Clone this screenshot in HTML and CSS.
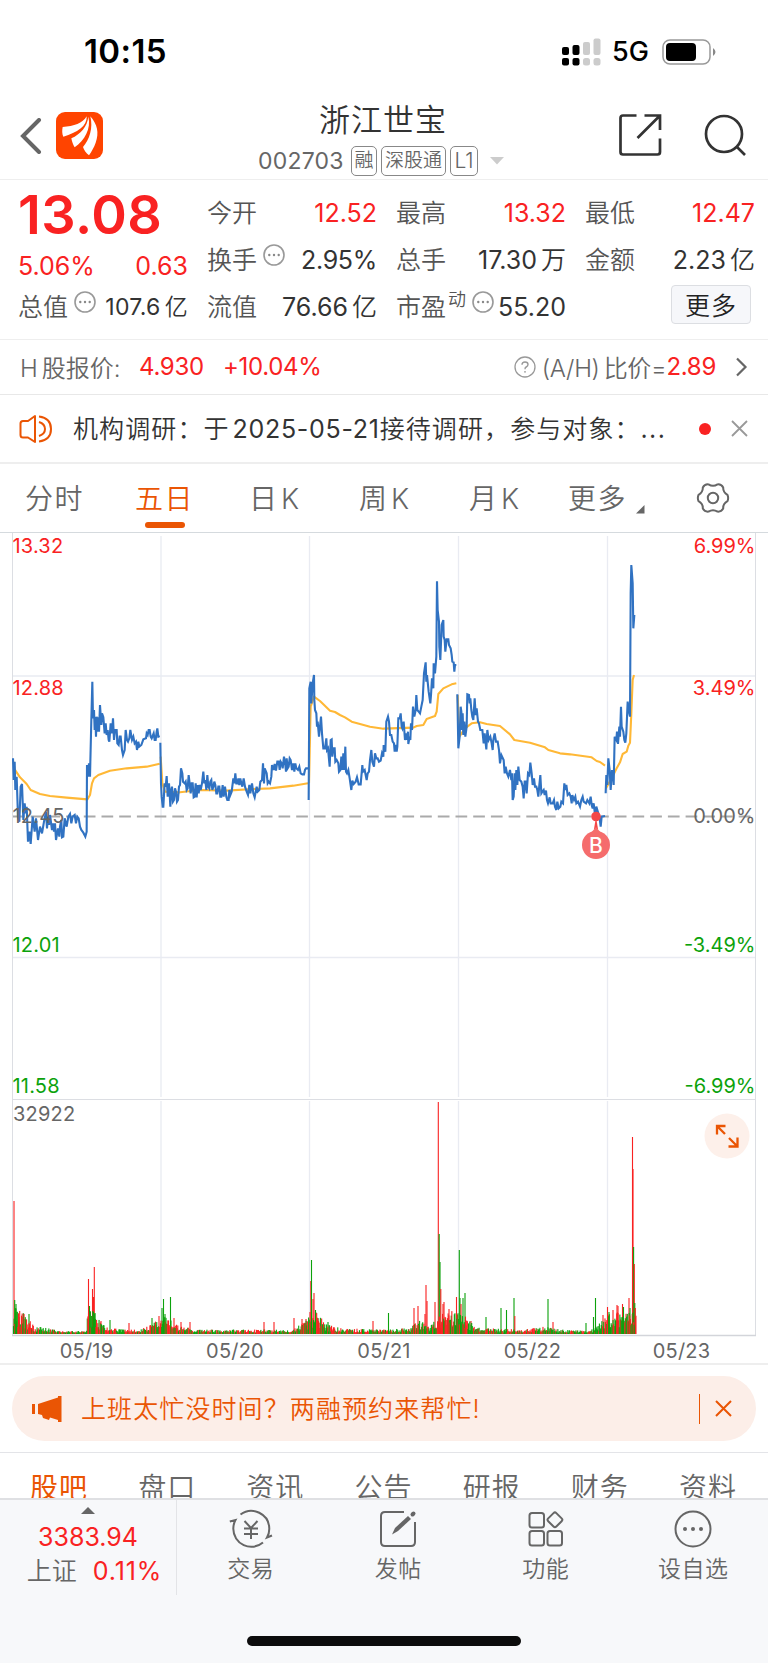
FILE: index.html
```html
<!DOCTYPE html>
<html lang="zh-CN">
<head>
    <meta charset="UTF-8">
    <meta name="viewport" content="width=device-width, initial-scale=1.0">
    <title>浙江世宝 002703</title>
    <link rel="stylesheet" href="styles.css">
</head>
<body>
    <div class="status-bar">
        <span class="time">10:15</span>
        <div class="status-icons">
            <svg class="signal" width="39" height="28" viewBox="0 0 39 28">
                <rect x="0" y="9" width="7" height="8" rx="2"/>
                <rect x="10.5" y="7" width="7" height="10" rx="2"/>
                <rect class="off" x="21" y="4" width="7" height="13" rx="2"/>
                <rect class="off" x="31.5" y="0.500" width="7" height="16.500" rx="2"/>
                <rect x="0" y="20" width="7" height="7.500" rx="2"/>
                <rect x="10.5" y="20" width="7" height="7.500" rx="2"/>
                <rect class="off" x="21" y="20" width="7" height="7.500" rx="2.500"/>
                <rect class="off" x="31.5" y="20" width="7" height="7.500" rx="2.500"/>
            </svg>
            <span class="network">5G</span>
            <svg class="battery" width="54" height="26" viewBox="0 0 54 26">
                <rect x="1" y="1" width="47" height="24" rx="7" fill="none" stroke="#999" stroke-width="1.500"/>
                <rect x="4" y="4" width="30" height="18" rx="4"/>
                <path d="M51 9 Q56 13 51 17Z" fill="#888"/>
            </svg>
        </div>
    </div>

    <header class="header">
        <div class="header-left">
            <svg class="back" width="22" height="36" viewBox="0 0 22 36">
                <path d="M19 2 L3 18 L19 34" fill="none" stroke="#666" stroke-width="4" stroke-linecap="round"/>
            </svg>
            <svg class="logo" width="47" height="47" viewBox="0 0 141 141">
                <rect width="141" height="141" rx="27" fill="#ff4400"/>
                <path d="M20 45 C54 43 80 34 92 13 C94 42 64 62 22 74 C18 66 18 55 20 45Z" fill="#fff"/>
                <path d="M97 14 C106 50 86 84 56 106 C51 98 48 89 46 79 C74 66 94 44 97 14Z" fill="#fff"/>
                <path d="M103 13 C124 38 130 62 119 92 C114 106 107 118 99 130 C90 124 84 114 81 105 C100 84 112 48 103 13Z" fill="#fff"/>
            </svg>
        </div>
        <div class="header-title">
            <div class="name">浙江世宝</div>
            <div class="code">
                <span class="code-num">002703</span>
                <span class="tag">融</span>
                <span class="tag tag-wide">深股通</span>
                <span class="tag tag-l1">L1</span>
                <svg class="drop" width="14" height="8" viewBox="0 0 14 8"><path d="M0 0 H14 L7 7.500Z" fill="#ccc"/></svg>
            </div>
        </div>
        <div class="header-right">
            <svg width="43" height="43" viewBox="0 0 43 43" fill="none" stroke="#333" stroke-width="2.700">
                <path d="M17.500 1.500 H4 Q1.500 1.500 1.500 4 V38 Q1.500 40.500 4 40.500 H38.500 Q41 40.500 41 38 V24.500"/>
                <path d="M25.500 1.500 H41 V16 M41 1.500 L18.500 24"/>
            </svg>
            <svg width="43" height="43" viewBox="0 0 43 43" fill="none" stroke="#333" stroke-width="2.700">
                <circle cx="20" cy="20" r="18"/>
                <path d="M32.500 32.500 L41 41"/>
            </svg>
        </div>
    </header>

    <section class="quote">
        <div class="quote-main">
            <div class="price">13.08</div>
            <div class="change"><span>5.06%</span><span>0.63</span></div>
            <div class="total">
                <span class="label">总值</span>
                <svg class="more-dot" width="22" height="22" viewBox="0 0 22 22"><use href="#dots"/></svg>
                <span class="value value-small">107.6<i class="unit">亿</i></span>
            </div>
        </div>
        <div class="quote-col">
            <div class="row"><span class="label">今开</span><span class="value red">12.52</span></div>
            <div class="row">
                <span class="label">换手</span>
                <svg class="more-dot" width="22" height="22" viewBox="0 0 22 22">
                    <g id="dots">
                        <circle cx="11" cy="11" r="10" fill="none" stroke="#999" stroke-width="1.600"/>
                        <circle cx="6.300" cy="11" r="1.200" fill="#888"/>
                        <circle cx="11" cy="11" r="1.200" fill="#888"/>
                        <circle cx="15.700" cy="11" r="1.200" fill="#888"/>
                    </g>
                </svg>
                <span class="value value-percent">2.95%</span>
            </div>
            <div class="row"><span class="label">流值</span><span class="value">76.66<i class="unit">亿</i></span></div>
        </div>
        <div class="quote-col">
            <div class="row"><span class="label">最高</span><span class="value red">13.32</span></div>
            <div class="row"><span class="label">总手</span><span class="value">17.30<i class="unit">万</i></span></div>
            <div class="row">
                <span class="label">市盈</span><span class="sup">动</span>
                <svg class="more-dot pe" width="22" height="22" viewBox="0 0 22 22"><use href="#dots"/></svg>
                <span class="value">55.20</span>
            </div>
        </div>
        <div class="quote-col">
            <div class="row"><span class="label">最低</span><span class="value red">12.47</span></div>
            <div class="row"><span class="label">金额</span><span class="value">2.23<i class="unit">亿</i></span></div>
            <div class="row"><button class="more-btn">更多</button></div>
        </div>
    </section>

    <section class="h-share">
        <span class="h-label">H<i class="unit">股报价:</i></span>
        <span class="h-price">4.930</span>
        <span class="h-change">+10.04%</span>
        <svg class="help" width="22" height="22" viewBox="0 0 22 22">
            <circle cx="11" cy="11" r="10" fill="none" stroke="#999" stroke-width="1.300"/>
            <path d="M8 8.800 Q8 6 11 6 Q14 6 14 8.500 Q14 10.200 12.200 11 Q11 11.600 11 13.200" fill="none" stroke="#999" stroke-width="1.400"/>
            <circle cx="11" cy="15.800" r="0.900" fill="#999"/>
        </svg>
        <span class="ratio">(A/H)<i class="unit">比价</i>=</span><span class="ratio-num">2.89</span>
        <svg class="arrow" width="13" height="20" viewBox="0 0 13 20"><path d="M2 1.500 L10.500 10 L2 18.500" fill="none" stroke="#666" stroke-width="2.200"/></svg>
    </section>

    <section class="news">
        <svg class="speaker" width="34" height="30" viewBox="0 0 34 30" fill="none" stroke="#ea5504" stroke-width="2">
            <path d="M16 2 V28 L9 23.500 H4 Q1.500 23.500 1.500 21 V9.500 Q1.500 7 4 7 H9Z" stroke-linejoin="round"/>
            <path d="M20 8 Q26 10 26 15 Q26 20 20 22"/>
            <path d="M20 2.500 Q32 4 32 15 Q32 26 20 27.500"/>
        </svg>
        <span class="news-text"><span>机构调研：于</span><span class="news-date">2025-05-21</span><span>接待调研，参与对象：</span><span class="ellipsis">...</span></span>
        <span class="red-dot"></span>
        <svg width="17" height="17" viewBox="0 0 17 17"><path d="M1 1 L16 16 M16 1 L1 16" stroke="#999" stroke-width="1.800"/></svg>
    </section>

    <nav class="period-tabs">
        <span class="period">分时</span>
        <span class="period active">五日</span>
        <span class="period k">日K</span>
        <span class="period k">周K</span>
        <span class="period k">月K</span>
        <span class="period more">更多</span>
        <svg class="corner" width="9" height="9" viewBox="0 0 9 9"><path d="M8.500 0 V8.500 H0Z" fill="#666"/></svg>
        <svg class="gear" width="34" height="32" viewBox="-17 -16 34 32" fill="none" stroke="#666" stroke-width="2" stroke-linejoin="round">
            <path d="M14.500 3.200 Q9.900 5.700 10.200 10.600 Q8.300 14 4.500 13.600 Q0 10.800 -4.500 13.600 Q-8.300 14 -10.200 10.600 Q-9.900 5.700 -14.500 3.200 Q-15.800 0 -14.500 -3.200 Q-9.900 -5.700 -10.200 -10.600 Q-8.300 -14 -4.500 -13.600 Q0 -10.800 4.500 -13.600 Q8.300 -14 10.200 -10.600 Q9.900 -5.700 14.500 -3.200 Q15.800 0 14.500 3.200Z"/>
            <circle r="5.200"/>
        </svg>
    </nav>

    <section class="chart-box">
        <svg class="chart" width="768" height="831" viewBox="0 0 768 831">
            <!-- grid -->
            <g class="grid">
                <path d="M13 143 H755 M13 424.500 H755"/>
                <path d="M161 3 V564 M309.500 3 V564 M458.500 3 V564 M607.500 3 V564"/>
                <path d="M161 568 V801 M309.500 568 V801 M458.500 568 V801 M607.500 568 V801"/>
            </g>
            <path class="frame" d="M12.500 0 V802 M755.500 0 V802 M12.500 566.500 H755"/>
            <path class="frame-bottom" d="M12 802.500 H756"/>
            <path class="zero" d="M13 283.500 H755"/>

            <!-- average price -->
            <g class="avg">
                <g transform="translate(0 107) scale(.33333)">
                    <polyline points="40,365 44,388 60,412 80,432 92,450 120,462 150,468 200,473 262,478 270,465 276,430 282,415 295,405 330,392 380,385 440,380 479,371"/>
                    <polyline points="482,350 487,430 495,455 540,457 600,450 680,452 760,447 810,445 880,437 924,430"/>
                </g>
                <g transform="translate(300 7) scale(.33333)">
                    <polyline points="27,730 32,500 42,470 60,483 90,512 105,516 120,525 135,532 155,545 180,552 210,560 250,566 340,563 350,558 370,555 380,537 405,528 410,515 415,462 430,445 455,433 469,430"/>
                    <polyline points="473,465 478,590 495,565 515,550 540,547 560,552 600,558 630,583 643,600 690,608 735,622 745,630 780,640 810,643 875,652 890,663 900,666 915,677"/>
                    <polyline points="918,745 935,715 950,685 960,667 968,642 980,635 985,617 990,608 994,520 998,420 1002,405"/>
                </g>
            </g>

            <!-- price -->
            <g class="line">
                <g transform="translate(0 107) scale(.33333)">
                    <polyline points="39,355 41,420 44,365 46,450 50,410 54,530 58,545 62,440 66,432 70,540 74,490 77,520 80,500 84,605 88,575 92,612 98,530 104,575 108,535 114,600 120,560 126,580 132,545 138,515 141,565 144,530 147,555 150,525 156,570 160,550 162,575 165,550 168,600 174,565 178,590 180,560 184,540 186,592 190,590 194,535 200,560 205,530 210,522 214,550 218,530 224,525 228,550 232,530 236,535 240,560 244,570 250,578 256,590 260,575 261,375 264,410 267,370 270,410 274,240 277,125 279,235 282,210 284,270 286,230 288,290 290,230 292,275 295,232 297,275 300,195 304,255 306,220 310,232 314,280 317,250 320,285 323,270 326,300 328,305 332,250 336,280 339,235 342,300 345,270 350,270 352,310 356,315 359,290 362,290 366,330 369,345 374,330 377,270 381,300 384,305 388,295 391,270 396,300 400,290 404,310 408,305 411,330 415,305 418,320 424,315 430,298 438,295 440,280 443,285 446,270 449,270 452,290 455,295 461,280 464,300 467,300 470,275 472,265 475,290 479,288"/>
                    <polyline points="481,308 483,430 485,470 488,500 490,500 494,430 497,440 500,408 503,470 507,430 509,460 511,500 514,450 516,440 519,485 522,480 525,445 528,455 531,485 534,480 537,440 540,435 543,385 547,400 549,425 554,430 557,425 560,450 563,445 566,405 570,440 572,460 575,430 578,430 581,472 584,470 587,430 590,472 593,435 596,460 599,435 602,450 606,430 610,395 613,430 616,420 619,450 622,405 625,440 628,445 631,425 634,420 637,450 640,440 643,425 646,435 649,460 652,460 655,440 658,440 661,470 664,470 668,435 671,470 675,440 679,470 682,480 686,480 688,450 691,465 695,455 700,415 703,430 706,400 709,430 712,430 715,415 718,435 721,415 724,430 727,440 731,415 735,440 740,455 744,465 748,435 751,460 756,430 760,460 764,472 770,440 773,455 778,450 781,425 786,420 789,370 792,430 794,385 800,400 803,430 806,425 810,430 814,410 816,375 821,390 824,372 828,392 832,365 836,365 839,390 842,365 845,370 848,385 852,350 856,375 858,395 860,355 863,385 866,380 869,355 872,360 876,390 880,370 883,395 886,370 889,385 894,390 898,380 902,400 907,403 912,403 915,390 918,385 924,385"/>
                </g>
                <g transform="translate(300 7) scale(.33333)">
                    <polyline points="26,780 28,445 32,425 34,490 38,430 42,405 43,480 45,510 49,520 51,560 53,545 57,590 60,560 63,530 66,580 70,625 75,625 79,595 81,630 84,625 89,680 92,600 95,598 97,650 100,625 104,625 106,665 110,660 115,670 117,695 121,690 124,650 127,690 130,640 133,690 136,620 138,695 141,700 145,690 149,715 154,750 157,722 161,732 167,725 171,712 176,733 182,733 187,675 189,695 194,690 200,720 203,700 207,695 210,660 214,630 217,665 222,680 225,640 229,655 233,655 237,665 242,662 246,640 250,650 251,615 256,635 259,545 264,530 267,545 270,585 274,585 278,605 282,610 284,635 287,615 290,635 292,620 295,535 299,535 302,520 305,560 307,565 311,545 315,600 319,580 321,600 324,575 325,612 329,590 331,600 333,550 336,570 339,500 343,530 347,510 349,465 352,510 356,515 360,520 364,500 368,480 372,400 377,367 379,425 381,405 386,455 391,490 393,465 396,415 400,445 401,370 405,400 409,350 411,124 413,210 417,245 418,320 421,360 425,255 430,240 431,290 434,300 436,335 440,298 445,298 447,315 452,325 455,345 457,365 461,367 463,395 465,375 469,375"/>
                    <polyline points="472,463 475,625 479,590 482,500 484,515 486,570 488,520 490,585 493,545 496,590 500,560 502,463 507,465 509,490 511,475 514,510 517,530 520,540 524,475 527,525 530,505 534,545 537,550 541,570 547,570 551,610 554,580 559,628 562,570 566,600 571,590 575,610 578,630 580,600 584,580 588,605 593,605 597,630 600,670 604,645 611,660 614,700 617,680 621,700 625,710 630,690 634,720 636,700 638,780 641,770 644,700 646,750 649,690 652,735 655,680 659,720 664,725 668,740 671,775 674,725 677,725 680,760 684,700 688,705 691,668 695,700 698,735 702,715 705,740 709,740 712,750 715,770 718,735 721,705 724,760 727,755 731,750 734,765 738,752 741,780 744,790 749,772 752,790 758,790 762,780 765,800 769,810 772,785 776,805 781,800 784,785 789,790 793,730 796,750 799,735 803,765 808,760 812,770 815,790 817,765 822,780 826,770 829,790 834,785 840,800 844,780 848,770 851,785 858,790 862,780 868,790 872,770 875,795 878,805 881,790 884,815 886,830 889,800 892,810 895,820 899,835 902,860 905,830 915,828"/>
                    <polyline points="917,760 919,705 922,735 925,655 929,690 932,750 936,690 939,700 941,735 944,590 949,600 951,575 954,612 958,560 960,590 963,500 965,560 970,575 973,600 976,608 979,580 983,485 987,515 990,530 992,160 994,75 998,130 1000,265 1003,225"/>
                </g>
            </g>

            <g id="volume"></g>

            <!-- buy marker -->
            <circle cx="596" cy="283.500" r="4.800" fill="#f44848"/>
            <path d="M596 284 L598 296 H594Z" fill="#f44848"/>
            <circle cx="596" cy="312" r="14" fill="#f56c6c"/>
            <path d="M596 294 L602 301 H590Z" fill="#f56c6c"/>
            <text class="marker" x="596" y="319.500" text-anchor="middle">B</text>

            <g class="axis">
                <text class="up" x="12.500" y="20">13.32</text>
                <text class="up" x="12.500" y="162">12.88</text>
                <text class="flat" x="12.500" y="290">12.45</text>
                <text class="down" x="12.500" y="418.500">12.01</text>
                <text class="down" x="12.500" y="559.500">11.58</text>
                <text class="flat" x="13" y="587.500">32922</text>
            </g>
            <g class="axis percent" text-anchor="end">
                <text class="up" x="755.500" y="20">6.99%</text>
                <text class="up" x="755.500" y="162">3.49%</text>
                <text class="flat" x="755.500" y="290">0.00%</text>
                <text class="down" x="755.500" y="418.500">-3.49%</text>
                <text class="down" x="755.500" y="559.500">-6.99%</text>
            </g>
            <g class="axis dates" text-anchor="middle">
                <text x="86.500" y="824.500">05/19</text>
                <text x="235" y="824.500">05/20</text>
                <text x="384" y="824.500">05/21</text>
                <text x="532.500" y="824.500">05/22</text>
                <text x="681.500" y="824.500">05/23</text>
            </g>
        </svg>
        <svg class="expand" width="46" height="46" viewBox="0 0 46 46">
            <circle cx="23" cy="23" r="22.500" fill="#fdf0ea"/>
            <path d="M13 21.500 V13 H21.500 M13 13 L21 21 M24.500 33.500 H33.500 V24.500 M33.500 33.500 L25 25" fill="none" stroke="#ea5504" stroke-width="2.300"/>
        </svg>
    </section>

    <section class="promo">
        <div class="banner">
            <svg width="30" height="26" viewBox="0 0 30 26" fill="#ea5504">
                <rect x="0" y="8" width="3" height="10"/>
                <path d="M6 8 L26 1.500 V0 H29.500 V26 H26 V24 L18 21.500 L17 24 L11 22 L10 19 L6 18Z"/>
            </svg>
            <span class="banner-text">上班太忙没时间？两融预约来帮忙!</span>
            <span class="banner-line"></span>
            <svg width="17" height="17" viewBox="0 0 17 17"><path d="M1 1 L16 16 M16 1 L1 16" stroke="#ea5504" stroke-width="2"/></svg>
        </div>
    </section>

    <nav class="info-tabs">
        <span class="active">股吧</span>
        <span>盘口</span>
        <span>资讯</span>
        <span>公告</span>
        <span>研报</span>
        <span>财务</span>
        <span>资料</span>
    </nav>

    <footer class="bottom-bar">
        <div class="index">
            <svg width="14" height="7" viewBox="0 0 14 7"><path d="M7 0 L14 7 H0Z" fill="#666"/></svg>
            <div class="index-num">3383.94</div>
            <div class="index-row"><span class="index-name">上证</span><span class="index-change">0.11%</span></div>
        </div>
        <div class="action">
            <svg width="44" height="40" viewBox="0 0 44 40" fill="none" stroke="#666" stroke-width="2">
                <path d="M11.500 5.500 A18 18 0 0 1 40.300 19.700 A18 18 0 0 1 38 28.500 L43 26.500"/>
                <path d="M34 33.500 A18 18 0 0 1 4.300 19.700 A18 18 0 0 1 6.500 11 L0.800 12.500"/>
                <path d="M15.500 12 L22 19 L28.500 12 M22 19 V30 M15 19.500 H29 M15 25 H29"/>
            </svg>
            <span>交易</span>
        </div>
        <div class="action">
            <svg width="38" height="40" viewBox="0 0 38 40" fill="none" stroke="#666" stroke-width="2">
                <path d="M25 3 H6 Q2 3 2 7 V33 Q2 37 6 37 H32 Q36 37 36 33 V13"/>
                <path d="M13 25.500 L16 19 L29 7 L32 10 L19 22Z" fill="#666" stroke="none"/>
                <path d="M33.500 5.500 L34.500 4.500" stroke-width="4" stroke-linecap="round"/>
            </svg>
            <span>发帖</span>
        </div>
        <div class="action">
            <svg width="36" height="40" viewBox="0 0 36 40" fill="none" stroke="#666" stroke-width="2">
                <rect x="1.500" y="4" width="14.500" height="14.500" rx="2.500"/>
                <rect x="1.500" y="22" width="14.500" height="14.500" rx="2.500"/>
                <rect x="19.500" y="22" width="14.500" height="14.500" rx="2.500"/>
                <rect x="21" y="5" width="11.500" height="11.500" rx="2" transform="rotate(45 26.750 11)"/>
            </svg>
            <span>功能</span>
        </div>
        <div class="action">
            <svg width="40" height="40" viewBox="0 0 40 40">
                <circle cx="20" cy="20" r="17.500" fill="none" stroke="#666" stroke-width="2"/>
                <circle cx="12" cy="20" r="2" fill="#666"/>
                <circle cx="20" cy="20" r="2" fill="#666"/>
                <circle cx="28" cy="20" r="2" fill="#666"/>
            </svg>
            <span>设自选</span>
        </div>
    </footer>
    <div class="home-area"><div class="home-indicator"></div></div>

    <script src="volume.js"></script>
</body>
</html>
```
FILE: styles.css
```css
* {
    box-sizing: border-box;
}

body {
    margin: 0;
    width: 768px;
    height: 1663px;
    overflow: hidden;
    background-color: #fff;
    color: #333;
    font-family: Inter, "Noto Sans CJK SC", sans-serif;
    font-size: 25px;
    white-space: nowrap;
}

svg {
    display: block;
    flex: none;
}

i {
    font-style: normal;
}

.red {
    color: #f92222;
}

.label,
.unit,
.name,
.sup,
.tag,
.more-btn,
.h-label,
.ratio,
.news-text,
.period,
.banner-text,
.info-tabs,
.index-name,
.action {
    font-weight: 350;
}

/* status bar */
.status-bar {
    height: 90px;
    padding: 30px 52px 0 84px;
    display: flex;
    justify-content: space-between;
    align-items: flex-start;
    color: #000;
}

.time {
    font-size: 33px;
    line-height: 42px;
    font-weight: 600;
    letter-spacing: 0.4px;
}

.status-icons {
    display: flex;
    align-items: center;
    padding-top: 7px;
}

.signal .off {
    fill: #ccc;
}

.network {
    width: 50px;
    margin-left: 11px;
    padding-top: 1px;
    font-size: 27px;
    line-height: 28px;
    font-weight: 450;
}

/* header */
.header {
    height: 90px;
    display: flex;
    justify-content: space-between;
    border-bottom: 1px solid #eee;
}

.header-left {
    width: 143px;
    padding: 2px 0 0 20px;
    display: flex;
    align-items: center;
    gap: 14px;
}

.header-title {
    padding-top: 9px;
}

.name {
    width: 130px;
    margin-left: 61px;
    font-size: 31px;
    line-height: 42px;
    letter-spacing: 1px;
}

.code {
    display: flex;
    align-items: center;
    margin-top: 4px;
    height: 31px;
}

.code-num {
    width: 93px;
    color: #666;
    font-size: 23px;
    letter-spacing: 0.2px;
}

.tag {
    width: 26px;
    height: 30px;
    margin-right: 4px;
    border: 1.5px solid #888;
    border-radius: 5px;
    color: #666;
    font-size: 19px;
    line-height: 27px;
    text-align: center;
}

.tag-wide {
    width: 65px;
}

.tag-l1 {
    width: 28px;
    font-size: 21px;
}

.drop {
    margin-left: 8px;
}

.header-right {
    padding: 24px 21px 0 0;
    display: flex;
    gap: 42px;
}

/* quote */
.quote {
    height: 160px;
    padding: 9px 13px 0 18px;
    display: flex;
    gap: 20px;
    border-bottom: 1px solid #eee;
}

.quote-main {
    width: 170px;
}

.price {
    color: #f92222;
    font-size: 54px;
    font-weight: 600;
    line-height: 52px;
    letter-spacing: 0.5px;
    height: 50px;
}

.change {
    height: 54px;
    display: flex;
    justify-content: space-between;
    align-items: center;
    color: #f92222;
}

.total {
    height: 27px;
    display: flex;
    align-items: center;
}

.quote-col {
    width: 170px;
    margin-left: -1px;
}

.row {
    height: 47px;
    display: flex;
    align-items: center;
}

.label {
    color: #555;
    line-height: 30px;
}

.value {
    margin-left: auto;
    line-height: 30px;
}

.value-small {
    font-size: 23px;
    letter-spacing: 0.3px;
}

.value-percent {
    letter-spacing: -0.3px;
}

.unit {
    margin-left: 4px;
}

.more-dot {
    margin: -9px 0 0 6px;
}

.sup {
    margin: -18px 0 0 2px;
    color: #555;
    font-size: 18px;
}

.more-btn {
    width: 80px;
    height: 39px;
    margin: -5px 4px 0 auto;
    padding: 3px 0 0;
    background-color: #f6f7fa;
    border: 1.5px solid #dcdee2;
    border-radius: 4px;
    color: #222;
    font-family: inherit;
    font-size: 25px;
    line-height: 34px;
    letter-spacing: 1px;
}

/* H share */
.h-share {
    height: 55px;
    padding: 0 20px 1px;
    display: flex;
    align-items: center;
    border-bottom: 1px solid #e8e8e8;
    color: #666;
    font-size: 24px;
    letter-spacing: -0.3px;
}

.h-label {
    width: 119px;
    letter-spacing: 0;
}

.h-price {
    width: 84px;
    color: #f92222;
}

.h-change,
.ratio-num {
    color: #f92222;
}

.help {
    margin-left: auto;
    margin-right: 6px;
}

.ratio {
    font-size: 24px;
    letter-spacing: -0.3px;
}

.arrow {
    margin-left: 19px;
}

/* news */
.news {
    height: 69px;
    padding: 0 20px 0 19px;
    display: flex;
    align-items: center;
    border-bottom: 2px solid #eee;
}

.news-text {
    margin: -3px 0 0 20px;
    width: 610px;
    display: flex;
    align-items: baseline;
    letter-spacing: 1.1px;
}

.news-date {
    margin: 0 0 0 3px;
    font-weight: 400;
    letter-spacing: 0.7px;
    font-feature-settings: "calt" 0;
}

.ellipsis {
    font-family: "Noto Sans", sans-serif;
    font-weight: 400;
    letter-spacing: 2px;
}

.red-dot {
    width: 12px;
    height: 12px;
    margin: 0 20px 0 16px;
    border-radius: 50%;
    background-color: #f92222;
}

/* period tabs */
.period-tabs {
    height: 69px;
    padding: 0 38px 0 25px;
    display: flex;
    align-items: center;
    border-bottom: 1px solid #d5dade;
    color: #666;
    font-size: 28px;
}

.period {
    width: 110px;
    height: 68px;
    line-height: 71px;
    letter-spacing: 1.5px;
}

.period.k {
    margin-left: 4px;
    width: 106px;
    letter-spacing: 4px;
}

.period.more {
    width: 106px;
    margin-left: -7px;
}

.period.active {
    display: flex;
    flex-direction: column;
    color: #ea5504;
}

.period.active::after {
    content: "";
    width: 40px;
    height: 6px;
    margin: -13px 0 0 10px;
    flex: none;
    border-radius: 3px;
    background-color: #ea5504;
}

.corner {
    margin: 22px 0 0 -38px;
}

.gear {
    margin-left: auto;
}

/* chart */
.chart-box {
    position: relative;
    height: 832px;
    border-bottom: 2px solid #eee;
}

.grid path {
    fill: none;
    stroke: #e9ebf2;
    stroke-width: 1.3;
}

.frame {
    fill: none;
    stroke: #dcdee3;
}

.frame-bottom {
    stroke: #d3d5da;
    stroke-width: 1.3;
}

.zero {
    stroke: #aaa;
    stroke-width: 1.8;
    stroke-dasharray: 11.7 6;
}

.avg polyline {
    fill: none;
    stroke: #ffb836;
    stroke-width: 6.3;
    stroke-linejoin: round;
}

.line polyline {
    fill: none;
    stroke: #3072c2;
    stroke-width: 6.3;
}

.axis {
    font-size: 20px;
    letter-spacing: 0.2px;
}

.percent {
    letter-spacing: 0;
}

.axis .up {
    fill: #f92222;
}

.axis .down {
    fill: #0ca20c;
}

.axis .flat,
.dates text {
    fill: #666;
}

.marker {
    fill: #fff;
    font-size: 21px;
    font-weight: 500;
}

.expand {
    position: absolute;
    left: 704px;
    top: 580px;
}

.vol-up {
    fill: #f92222;
}

.vol-down {
    fill: #0ca20c;
}

/* promo banner */
.promo {
    height: 88px;
    padding: 11px 12px;
    border-bottom: 1px solid #e3e4e8;
}

.banner {
    height: 65px;
    padding: 0 24px 0 20px;
    display: flex;
    align-items: center;
    border-radius: 33px;
    background-color: #fceee8;
    color: #ea5504;
}

.banner-text {
    margin: -4px 0 0 19px;
    letter-spacing: 1.1px;
}

.banner-line {
    width: 1.5px;
    height: 30px;
    margin: 0 15px 0 auto;
    background-color: #ea5504;
}

/* info tabs, partly hidden by the bottom bar */
.info-tabs {
    height: 45px;
    padding: 16px 31px 0 30px;
    display: flex;
    justify-content: space-between;
    overflow: hidden;
    color: #666;
    font-size: 28px;
    line-height: 38px;
    letter-spacing: 1px;
}

.info-tabs .active {
    color: #ea5504;
    font-weight: 400;
}

/* bottom bar */
.bottom-bar {
    height: 97px;
    display: flex;
    border-top: 2px solid #dfe0e3;
    background-color: #f7f8fa;
    color: #666;
}

.index {
    width: 177px;
    height: 95px;
    padding-top: 7px;
    display: flex;
    flex-direction: column;
    align-items: center;
    border-right: 1.5px solid #e3e4e7;
}

.index-num {
    margin-top: 6px;
    color: #f92222;
    line-height: 34px;
}

.index-row {
    display: flex;
    gap: 16px;
    padding-left: 13px;
    line-height: 35px;
}

.index-change {
    color: #f92222;
    letter-spacing: 0.9px;
}

.action {
    width: 147.5px;
    padding-top: 9px;
    display: flex;
    flex-direction: column;
    align-items: center;
    font-size: 23px;
    line-height: 41px;
    letter-spacing: 0.5px;
}

.home-area {
    height: 69px;
    padding-top: 41px;
    background-color: #f7f8fa;
}

.home-indicator {
    width: 274px;
    height: 10px;
    margin: 0 auto;
    border-radius: 5px;
    background-color: #0c0c0c;
}
```
FILE: volume.js
```javascript
const volume = document.getElementById("volume");
const baseline = 801;

// [x, height] of the usual trade volume during the five days
const level = [
    [13, 20], [20, 16], [30, 10], [35, 5], [50, 4], [60, 2], [70, 2], [86, 2], [88, 15], [95, 16],
    [102, 8], [110, 4], [140, 3], [150, 6], [160, 13], [166, 13], [172, 9], [180, 5], [200, 3],
    [290, 3], [305, 8], [309, 12], [316, 16], [325, 7], [340, 4], [380, 3], [410, 4], [418, 9],
    [424, 8], [430, 5], [436, 12], [446, 15], [455, 16], [464, 13], [475, 5], [485, 4], [520, 3],
    [545, 5], [560, 3], [590, 2], [600, 8], [610, 14], [625, 15], [636, 14]
];

// [x, height, up]
const peaks = [
    [14, 133, 1], [14.7, 34, 0], [16, 30, 0], [17, 22, 0], [19, 17, 0], [22, 17, 1], [24, 15, 0], [29, 20, 0],
    [88.5, 55, 1], [89.5, 28, 0], [92.5, 45, 1], [93.5, 37, 1], [94.3, 67, 1], [95, 21, 0], [101, 13, 1],
    [110, 14, 0], [129, 11, 1], [152, 16, 0], [159, 18, 1], [162, 26, 0], [163.5, 35, 0], [165, 20, 0],
    [170.5, 37, 0], [174, 16, 1], [181, 12, 1], [190, 12, 1], [264, 12, 1], [274, 12, 1], [294, 16, 1],
    [302, 15, 1], [306, 15, 1], [310, 22, 1], [310.8, 53, 1], [311.5, 74, 0], [313, 35, 1], [314, 41, 1],
    [315.5, 24, 0], [318, 16, 0], [328, 12, 0], [373, 13, 1], [388.5, 21, 0], [414, 26, 1], [418, 28, 1],
    [425, 20, 1], [426, 49, 1], [427, 33, 1], [435, 32, 1], [438.3, 232, 1], [439.2, 100, 0], [440, 72, 0],
    [440.8, 45, 1], [443, 30, 1], [444, 32, 1], [449, 25, 1], [456.5, 37, 1], [459.3, 84, 0], [460, 36, 0],
    [461, 30, 1], [463, 36, 0], [465, 41, 0], [471, 13, 1], [486, 17, 0], [501, 26, 0], [506.5, 24, 0],
    [514, 36, 0], [514.8, 18, 1], [548, 35, 0], [553, 12, 1], [586, 11, 0], [593.5, 17, 0], [595.5, 36, 0],
    [603, 19, 1], [607.5, 27, 1], [609, 22, 0], [613, 24, 1], [617, 29, 1], [618, 28, 1], [622.5, 30, 1],
    [623.5, 27, 0], [629, 36, 1], [630, 26, 0], [632.5, 197, 1], [633, 165, 1], [633.6, 87, 0],
    [634.3, 70, 1], [634.8, 31, 0], [635.3, 26, 1]
];

let seed = 19;
function random() {
    seed = (seed * 16807) % 2147483647;
    return seed / 2147483647;
}

function levelAt(x) {
    for (let i = 1; i < level.length; i++) {
        if (x <= level[i][0]) {
            const [x0, h0] = level[i - 1];
            const [x1, h1] = level[i];
            return h0 + (h1 - h0) * (x - x0) / (x1 - x0);
        }
    }
    return 12;
}

function addBar(x, height, up) {
    const bar = document.createElementNS("http://www.w3.org/2000/svg", "rect");
    bar.setAttribute("x", x - 0.55);
    bar.setAttribute("y", baseline - height);
    bar.setAttribute("width", 1.1);
    bar.setAttribute("height", height);
    bar.setAttribute("class", up ? "vol-up" : "vol-down");
    volume.appendChild(bar);
}

peaks.forEach(([x, height, up]) => addBar(x, height, up));

for (let x = 13.5; x < 636; x += 0.62) {
    const height = Math.max(1.5, levelAt(x) * (0.4 + random() * 1.1));
    addBar(x, height, random() < 0.45);
}
```
